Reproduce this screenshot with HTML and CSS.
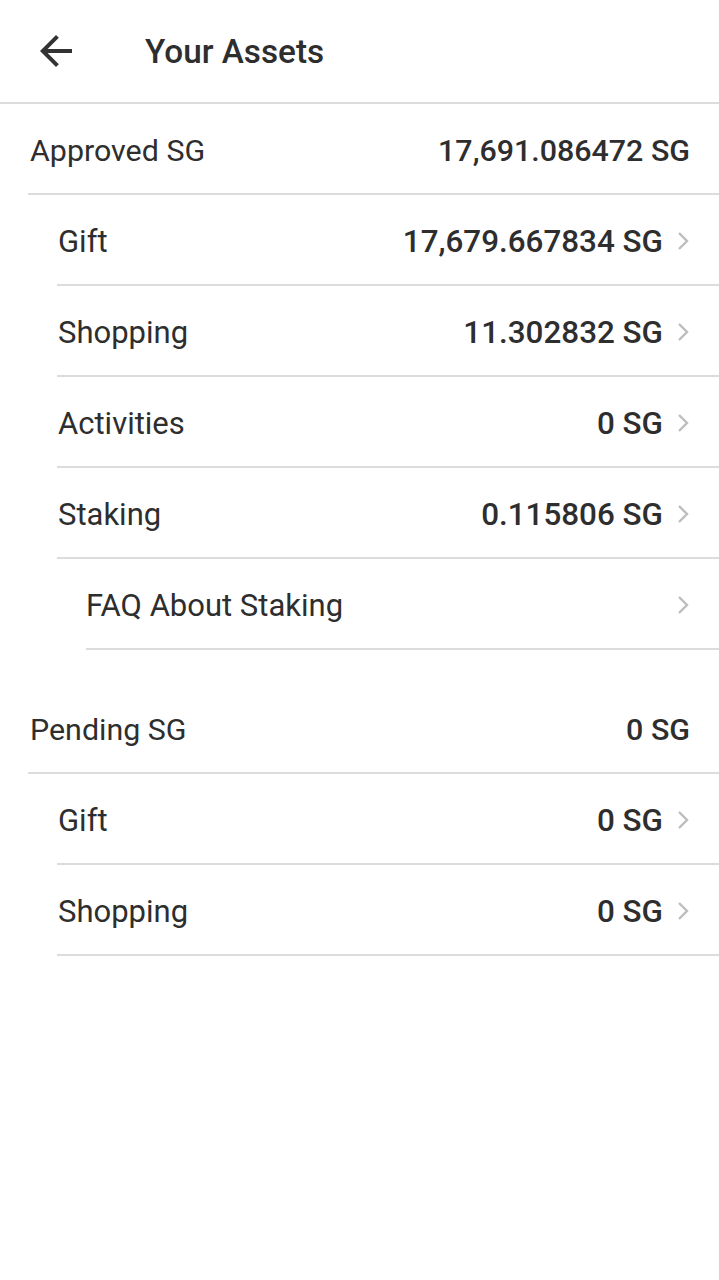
FILE: index.html
```html
<!DOCTYPE html>
<html>
<head>
<meta charset="utf-8">
<link rel="stylesheet" href="styles.css">
</head>
<body>
<header class="topbar">
  <svg class="back" viewBox="0 0 24 24" width="48" height="48"><path d="M20 11H7.83l5.59-5.59L12 4l-8 8 8 8 1.41-1.41L7.83 13H20v-2z" fill="#333"/></svg>
  <h1 class="title">Your Assets</h1>
</header>
<section class="group">
  <div class="row lvl0"><span class="label">Approved SG</span><span class="value">17,691.086472 SG</span></div>
  <div class="row lvl1"><span class="label">Gift</span><span class="value">17,679.667834 SG</span><svg class="chev" viewBox="0 0 14 22" width="14" height="22"><path d="M3 3l8 8-8 8" fill="none" stroke="#bdbdbd" stroke-width="2.4"/></svg></div>
  <div class="row lvl1"><span class="label">Shopping</span><span class="value">11.302832 SG</span><svg class="chev" viewBox="0 0 14 22" width="14" height="22"><path d="M3 3l8 8-8 8" fill="none" stroke="#bdbdbd" stroke-width="2.4"/></svg></div>
  <div class="row lvl1"><span class="label">Activities</span><span class="value">0 SG</span><svg class="chev" viewBox="0 0 14 22" width="14" height="22"><path d="M3 3l8 8-8 8" fill="none" stroke="#bdbdbd" stroke-width="2.4"/></svg></div>
  <div class="row lvl1"><span class="label">Staking</span><span class="value">0.115806 SG</span><svg class="chev" viewBox="0 0 14 22" width="14" height="22"><path d="M3 3l8 8-8 8" fill="none" stroke="#bdbdbd" stroke-width="2.4"/></svg></div>
  <div class="row lvl2"><span class="label">FAQ About Staking</span><svg class="chev" viewBox="0 0 14 22" width="14" height="22"><path d="M3 3l8 8-8 8" fill="none" stroke="#bdbdbd" stroke-width="2.4"/></svg></div>
</section>
<section class="group pending">
  <div class="row lvl0"><span class="label">Pending SG</span><span class="value">0 SG</span></div>
  <div class="row lvl1"><span class="label">Gift</span><span class="value">0 SG</span><svg class="chev" viewBox="0 0 14 22" width="14" height="22"><path d="M3 3l8 8-8 8" fill="none" stroke="#bdbdbd" stroke-width="2.4"/></svg></div>
  <div class="row lvl1"><span class="label">Shopping</span><span class="value">0 SG</span><svg class="chev" viewBox="0 0 14 22" width="14" height="22"><path d="M3 3l8 8-8 8" fill="none" stroke="#bdbdbd" stroke-width="2.4"/></svg></div>
</section>
</body>
</html>
```
FILE: styles.css
```css
html, body {
  margin: 0;
  padding: 0;
  background: #fff;
}
body {
  font-family: Roboto, "Noto Sans", sans-serif;
  color: #2e2e2e;
  width: 719px;
}
.topbar {
  height: 102px;
  border-bottom: 2px solid #dcdcdc;
  display: flex;
  align-items: center;
}
.back {
  margin-left: 32px;
  flex: none;
}
.title {
  margin: 0 0 0 65px;
  font-size: 33.3px;
  font-weight: 500;
  color: #2e2e2e;
}
.group.pending {
  margin-top: 33px;
}
.row {
  height: 86px;
  padding-top: 3px;
  border-bottom: 2px solid #dcdcdc;
  display: flex;
  align-items: center;
  padding-right: 29px;
}
.lvl0 { margin-left: 28px; padding-left: 2px; }
.lvl1 { margin-left: 57px; padding-left: 1px; }
.lvl2 { margin-left: 86px; padding-left: 0; }
.label {
  flex: 1;
  font-size: 31px;
  font-weight: 400;
}
.value {
  font-size: 31.4px;
  font-weight: 500;
}
.lvl0 .label,
.lvl0 .value {
  font-size: 30.4px;
}
.chev {
  margin-left: 13px;
  flex: none;
}
```
